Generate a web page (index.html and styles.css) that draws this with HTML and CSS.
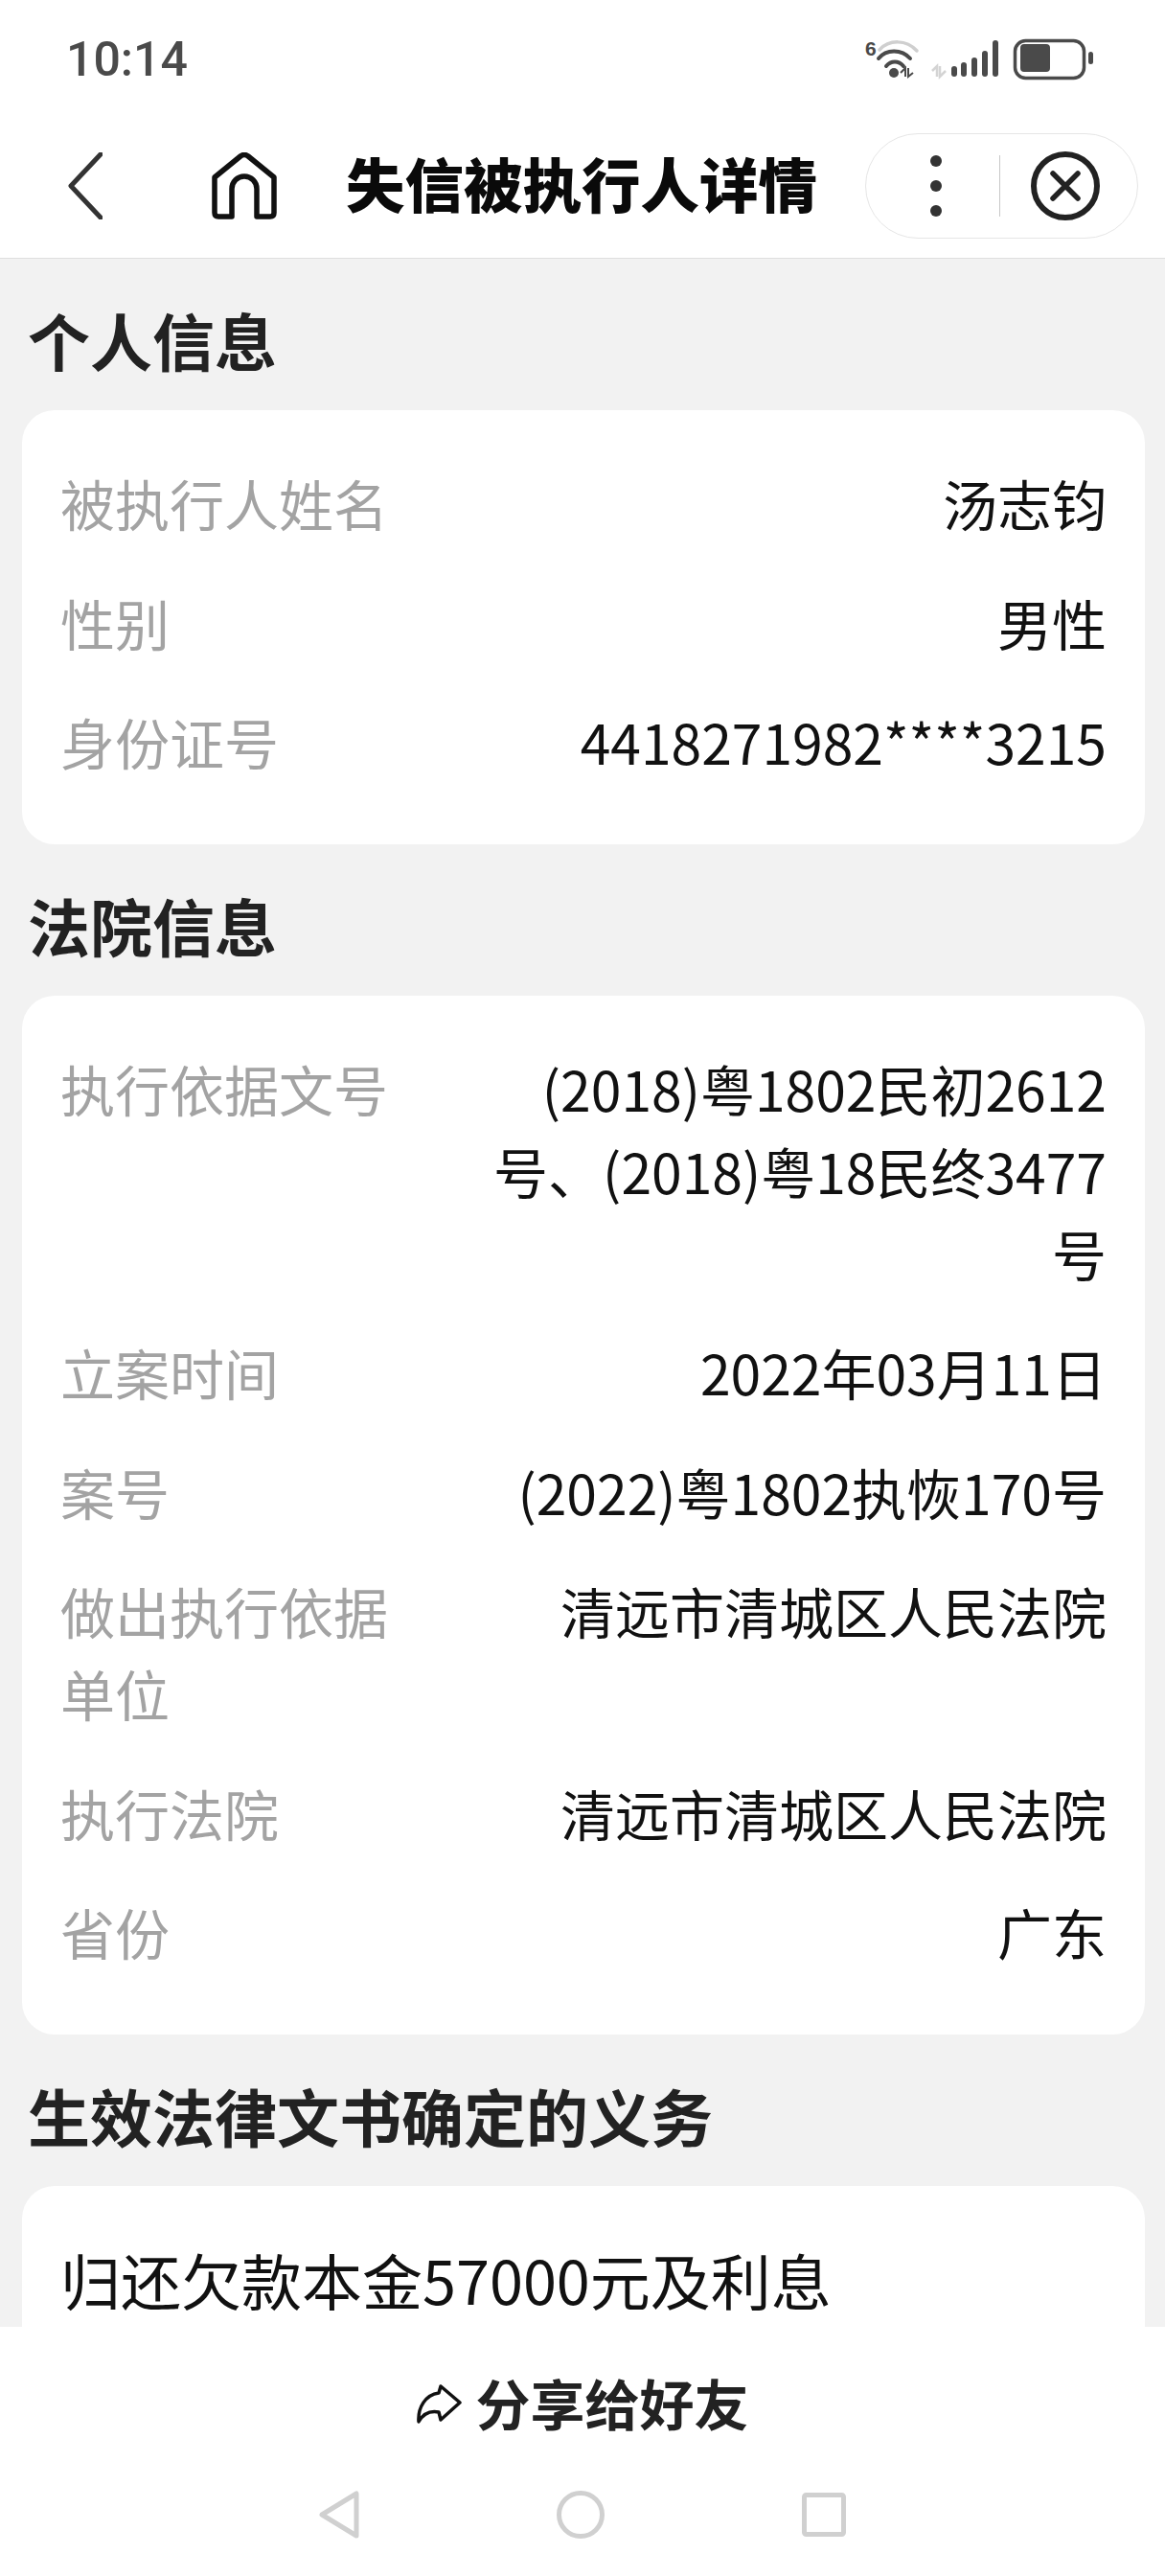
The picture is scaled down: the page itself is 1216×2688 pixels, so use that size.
FILE: index.html
```html
<!DOCTYPE html>
<html lang="zh-CN">
<head>
    <meta charset="UTF-8">
    <title>失信被执行人详情</title>
    <link rel="stylesheet" href="styles.css">
</head>
<body>
    <div class="page">
        <!-- 状态栏 -->
        <div class="status-bar">
            <span class="status-time">10:14</span>
            <svg class="status-icons" viewBox="0 0 240 44" width="240" height="44">
                <text class="status-six" x="0" y="18">6</text>
                <path d="M15 12 C25 1 43 1 54 13" fill="none" stroke="#cfcfcf" stroke-width="3.5" stroke-linecap="round"/>
                <path d="M14 21 C22 11 38 11 47 21" fill="none" stroke="#4a4a4a" stroke-width="4" stroke-linecap="round"/>
                <path d="M22 29 C27 23 35 23 40 29" fill="none" stroke="#4a4a4a" stroke-width="4" stroke-linecap="round"/>
                <circle cx="30" cy="36" r="5" fill="#4a4a4a"/>
                <path d="M37 36 L42 31 V40 M45 31 V40 L50 36" fill="none" stroke="#4a4a4a" stroke-width="2"/>
                <path d="M70 34 L75 29 V40 M78 29 V40 L84 34" fill="none" stroke="#d4d4d4" stroke-width="2.5"/>
                <g fill="none" stroke="#4a4a4a" stroke-width="6" stroke-linecap="round">
                    <path d="M93 32 V37"/>
                    <path d="M103 28 V37"/>
                    <path d="M114 23 V37"/>
                    <path d="M125 16 V37"/>
                    <path d="M136 5 V37"/>
                </g>
                <rect x="156.5" y="2.5" width="72" height="39" rx="11" fill="none" stroke="#4a4a4a" stroke-width="3.5"/>
                <rect x="162" y="6" width="31" height="29" rx="4" fill="#4a4a4a"/>
                <rect x="233" y="14" width="5" height="13" rx="2.5" fill="#4a4a4a"/>
            </svg>
        </div>

        <!-- 导航栏 -->
        <header class="nav-bar">
            <svg class="nav-back" viewBox="0 0 36 70" width="36" height="70">
                <path d="M34 2 L3 35 L34 68" fill="none" stroke="#333" stroke-width="5" stroke-linecap="round" stroke-linejoin="round"/>
            </svg>
            <svg class="nav-home" viewBox="0 0 68 70" width="68" height="70">
                <path d="M3 26 L30 4 Q34 1 38 4 L65 26 V63 Q65 67 61 67 H47 V38 A13 13 0 0 0 21 38 V67 H7 Q3 67 3 63 Z" fill="none" stroke="#111" stroke-width="5.5" stroke-linejoin="round"/>
            </svg>
            <h1 class="nav-title">失信被执行人详情</h1>
            <div class="capsule">
                <svg class="capsule-more" viewBox="0 0 14 66" width="14" height="66">
                    <circle cx="7" cy="7" r="6" fill="#333"/>
                    <circle cx="7" cy="33" r="6" fill="#333"/>
                    <circle cx="7" cy="59" r="6" fill="#333"/>
                </svg>
                <span class="capsule-line"></span>
                <svg class="capsule-close" viewBox="0 0 72 72" width="72" height="72">
                    <circle cx="36" cy="36" r="33" fill="none" stroke="#222" stroke-width="6"/>
                    <path d="M23 23 L49 49 M49 23 L23 49" fill="none" stroke="#222" stroke-width="5.5" stroke-linecap="round"/>
                </svg>
            </div>
        </header>

        <main class="content">
            <h2 class="section-title">个人信息</h2>
            <section class="card">
                <div class="row"><span class="row-label">被执行人姓名</span><span class="row-value">汤志钧</span></div>
                <div class="row"><span class="row-label">性别</span><span class="row-value">男性</span></div>
                <div class="row"><span class="row-label">身份证号</span><span class="row-value">4418271982****3215</span></div>
            </section>

            <h2 class="section-title">法院信息</h2>
            <section class="card">
                <div class="row"><span class="row-label">执行依据文号</span><span class="row-value">(2018)粤1802民初2612<br>号、(2018)粤18民终3477<br>号</span></div>
                <div class="row"><span class="row-label">立案时间</span><span class="row-value">2022年03月11日</span></div>
                <div class="row"><span class="row-label">案号</span><span class="row-value">(2022)粤1802执恢170号</span></div>
                <div class="row"><span class="row-label">做出执行依据单位</span><span class="row-value">清远市清城区人民法院</span></div>
                <div class="row"><span class="row-label">执行法院</span><span class="row-value">清远市清城区人民法院</span></div>
                <div class="row"><span class="row-label">省份</span><span class="row-value">广东</span></div>
            </section>

            <h2 class="section-title">生效法律文书确定的义务</h2>
            <section class="card">
                <p class="duty-text">归还欠款本金57000元及利息</p>
            </section>
        </main>

        <footer class="footer">
            <div class="share">
                <svg class="share-icon" viewBox="0 0 48 42" width="48" height="42">
                    <path d="M25 2 L45 19 L25 37 L23 29 C13 27 6 32 2 39 C1 24 9 11 23 9 Z" fill="none" stroke="#111" stroke-width="3.5" stroke-linejoin="round"/>
                </svg>
                <span>分享给好友</span>
            </div>
            <div class="system-nav">
                <svg viewBox="0 0 42 50" width="42" height="50">
                    <path d="M39 3 V47 L3 25 Z" fill="none" stroke="#d0d0d0" stroke-width="5" stroke-linejoin="round"/>
                </svg>
                <svg viewBox="0 0 50 50" width="50" height="50">
                    <circle cx="25" cy="25" r="22.5" fill="none" stroke="#d0d0d0" stroke-width="5"/>
                </svg>
                <svg viewBox="0 0 46 46" width="46" height="46">
                    <rect x="2.5" y="2.5" width="41" height="41" rx="2" fill="none" stroke="#d0d0d0" stroke-width="5"/>
                </svg>
            </div>
        </footer>
    </div>
</body>
</html>
```
FILE: styles.css
```css
html, body {
    margin: 0;
    padding: 0;
}

body {
    font-family: "Noto Sans CJK SC", "Noto Sans", sans-serif;
    background-color: #f2f2f2;
}

.page {
    display: flex;
    flex-direction: column;
    width: 1216px;
    height: 2688px;
    overflow: hidden;
}

/* 状态栏 */
.status-bar {
    display: flex;
    justify-content: space-between;
    align-items: flex-start;
    flex: none;
    height: 124px;
    padding: 40px 73px 0 69px;
    box-sizing: border-box;
    background-color: #fff;
}

.status-time {
    font-family: Roboto, sans-serif;
    font-size: 50px;
    font-weight: 500;
    line-height: 44px;
    color: #4a4a4a;
}

.status-six {
    font-family: "Liberation Sans", sans-serif;
    font-size: 21px;
    font-weight: 700;
    fill: #4a4a4a;
}

/* 导航栏 */
.nav-bar {
    display: flex;
    align-items: center;
    flex: none;
    height: 146px;
    padding: 0 28px 6px 71px;
    box-sizing: border-box;
    background-color: #fff;
    border-bottom: 1px solid #dedede;
}

.nav-back {
    margin-right: 114px;
}

.nav-home {
    margin-right: 72px;
}

.nav-title {
    flex: 1;
    margin: 0 0 6px 0;
    font-size: 61.5px;
    font-weight: 900;
    line-height: 70px;
    color: #0a0a0a;
}

.capsule {
    display: flex;
    align-items: center;
    width: 285px;
    height: 110px;
    padding-left: 66px;
    box-sizing: border-box;
    border: 1px solid #e6e6e6;
    border-radius: 55px;
}

.capsule-line {
    width: 1px;
    height: 64px;
    margin: 0 32px 0 59px;
    background-color: #c8c8c8;
}

/* 内容 */
.content {
    flex: 1;
    min-height: 0;
    overflow: hidden;
    padding: 0 21px 0 23px;
}

.section-title {
    margin: 0;
    padding: 41px 0 31px 6px;
    font-size: 65px;
    font-weight: 700;
    line-height: 86px;
    color: #222;
}

.card {
    padding: 38px 40px 41px 40px;
    background-color: #fff;
    border-radius: 34px;
}

.row {
    display: flex;
    justify-content: space-between;
    padding: 15px 0 23.5px 0;
    font-size: 57px;
    line-height: 86px;
}

.row-label {
    width: 370px;
    color: #a3a3a3;
}

.row-value {
    width: 660px;
    text-align: right;
    color: #111;
}

.duty-text {
    margin: 0;
    padding: 16px 0 22px 0;
    font-size: 63px;
    line-height: 86px;
    color: #111;
}

/* 底部 */
.footer {
    flex: none;
    height: 260px;
    padding-top: 35px;
    box-sizing: border-box;
    background-color: #fff;
}

.share {
    display: flex;
    justify-content: center;
    align-items: center;
    gap: 14px;
    font-size: 57px;
    font-weight: 700;
    line-height: 86px;
    color: #222;
}

.share-icon {
    margin-top: 5px;
}

.system-nav {
    display: flex;
    justify-content: center;
    align-items: center;
    gap: 206px;
    margin-top: 50px;
}
```
